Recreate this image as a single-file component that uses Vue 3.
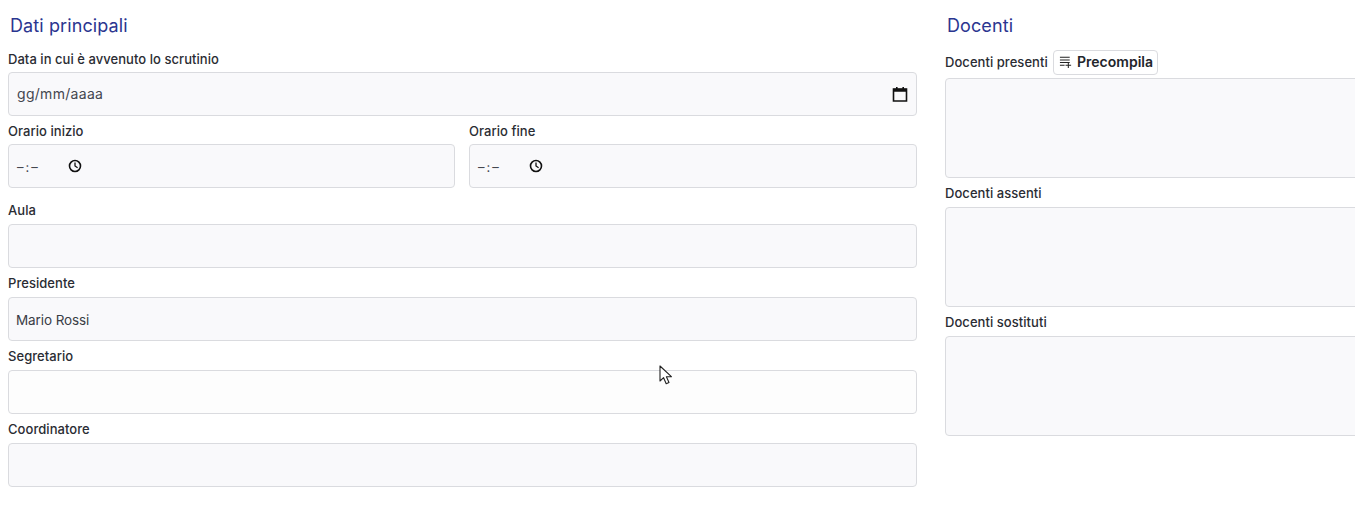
<script setup>
const groups = [
  { label: 'Aula', value: '', cls: 'after-row' },
  { label: 'Presidente', value: 'Mario Rossi' },
  { label: 'Segretario', value: '', cls: 'plain' },
  { label: 'Coordinatore', value: '' }
]
const teachers = ['Docenti assenti', 'Docenti sostituti']
</script>

<template>
  <main class="page">
    <section class="left">
      <h2 class="title">Dati principali</h2>
      <div class="group first">
        <label class="label">Data in cui è avvenuto lo scrutinio</label>
        <div class="field date">
          <span class="ghost">gg/mm/aaaa</span>
          <svg class="cal" width="16" height="16" viewBox="0 0 16 16">
            <path d="M1.500 3h13v12h-13z" fill="none" stroke="#111" stroke-width="1.600" />
            <path d="M1.500 2.800h13v3h-13zM4 1h1.600v2H4zM10.400 1H12v2h-1.600z" fill="#111" />
          </svg>
        </div>
      </div>
      <div class="row">
        <div class="group" v-for="t in ['Orario inizio', 'Orario fine']" :key="t">
          <label class="label tight">{{ t }}</label>
          <div class="field time">
            <span class="ghost dash">–:–</span>
            <svg class="clock" width="14" height="14" viewBox="0 0 14 14">
              <circle cx="7" cy="7" r="5.500" fill="none" stroke="#111" stroke-width="1.600" />
              <path d="M7 3.600V7l2.600 1.800" fill="none" stroke="#111" stroke-width="1.300" />
            </svg>
          </div>
        </div>
      </div>
      <div class="group" v-for="g in groups" :key="g.label" :class="g.cls">
        <label class="label">{{ g.label }}</label>
        <div class="field" :class="g.cls">{{ g.value }}</div>
      </div>
    </section>
    <section class="right">
      <h2 class="title">Docenti</h2>
      <div class="group">
        <div class="label-row">
          <label class="label">Docenti presenti</label>
          <button class="btn">
            <svg width="14" height="14" viewBox="0 0 14 14">
              <path d="M1 2h10.500M1 4.800h10.500M1 7.600h10.500M1 10.400h5M10 7.500v6M7 10.500h6" fill="none" stroke="#222" stroke-width="1.100" />
            </svg>
            Precompila
          </button>
        </div>
        <textarea class="area"></textarea>
      </div>
      <div class="group" v-for="t in teachers" :key="t">
        <label class="label">{{ t }}</label>
        <textarea class="area"></textarea>
      </div>
    </section>
    <svg class="cursor" width="14" height="21" viewBox="0 0 14 21">
      <path d="M1 1v15l3.600-3.300 2.600 6 2.800-1.200-2.600-5.800h5z" fill="#fff" stroke="#222" stroke-width="1.100" stroke-linejoin="round" />
    </svg>
  </main>
</template>

<style>
html, body { margin: 0; background: #fff; overflow: hidden; }
</style>

<style scoped>
.page {
  position: relative;
  display: flex;
  gap: 28px;
  width: 1355px;
  height: 518px;
  overflow: hidden;
  padding: 14px 0 0 8px;
  box-sizing: border-box;
  font-family: Inter, "Noto Sans", sans-serif;
  color: #22252b;
}
.left { flex: 0 0 909px; }
.right { flex: 0 0 445px; }
.title {
  margin: 0 0 11px 2px;
  font-size: 18px;
  line-height: 24px;
  font-weight: 400;
  letter-spacing: 0.1px;
  color: #2b3590;
}
.right .title { margin-bottom: 12px; }
.group { margin-bottom: 5px; }
.group.after-row { margin-top: 12px; }
.row { display: grid; grid-template-columns: 447px 448px; gap: 14px; }
.row .group { margin-bottom: 0; }
.label {
  display: block;
  margin-bottom: 3px;
  font-size: 13px;
  line-height: 20px;
  font-weight: 500;
  letter-spacing: 0.05px;
  color: #2a2c33;
}
.left .group:not(.first):not(.row .group) .label { margin-bottom: 4px; }
.field {
  display: flex;
  align-items: center;
  box-sizing: border-box;
  height: 44px;
  padding: 2px 7px 0;
  background: #f9f9fb;
  border: 1px solid #dadbdf;
  border-radius: 4px;
  font-size: 13.500px;
  letter-spacing: -0.1px;
  color: #3a3d45;
}
.field.plain { background: #fdfdfd; }
.date { justify-content: space-between; padding: 0 8px; }
.time { padding: 0 8px; }
.ghost { color: #44474f; font-size: 14px; letter-spacing: 0.3px; padding-bottom: 1px; }
.dash { width: 44px; font-size: 13px; letter-spacing: 2px; padding: 2px 0 0; }
.cal { flex: none; }
.clock { flex: none; margin-left: 7px; }
.label-row { display: flex; align-items: center; gap: 4px; height: 25px; margin: 0 0 3px; }
.label-row .label { margin: 0; width: 104px; flex: none; white-space: nowrap; padding-bottom: 2px; }
.btn {
  display: inline-flex;
  align-items: center;
  gap: 5px;
  box-sizing: border-box;
  width: 105px;
  height: 25px;
  padding: 0 4px 2px 5px;
  background: #fff;
  border: 1px solid #dadbdf;
  border-radius: 4px;
  font-family: inherit;
  font-size: 14px;
  font-weight: 600;
  color: #22252b;
}
.area {
  display: block;
  box-sizing: border-box;
  width: 100%;
  height: 100px;
  padding: 8px;
  background: #f9f9fb;
  border: 1px solid #dadbdf;
  border-radius: 4px;
  resize: none;
  outline: none;
}
.right .group .label { margin-bottom: 4px; }
.right .label-row .label { margin: 0; }
.cursor { position: absolute; left: 659px; top: 365px; }
</style>
